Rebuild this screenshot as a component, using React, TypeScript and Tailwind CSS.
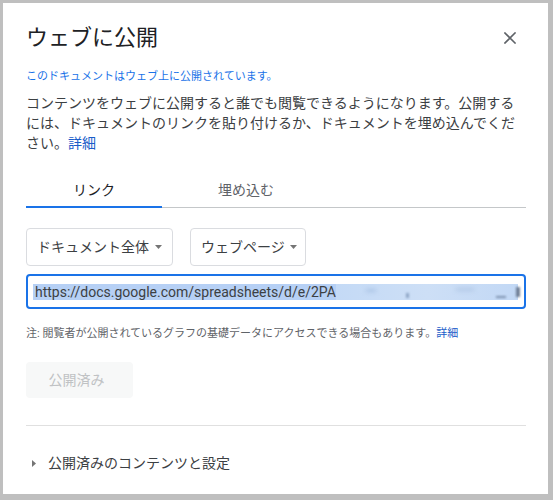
import React from "react";

function CloseIcon() {
  return (
    <svg width="12" height="12" viewBox="0 0 12 12" fill="none">
      <path d="M1 1 L11 11 M11 1 L1 11" stroke="#5f6368" strokeWidth="1.6" strokeLinecap="square" />
    </svg>
  );
}

function Caret() {
  return (
    <svg width="7" height="4" viewBox="0 0 7 4">
      <path d="M0 0 L7 0 L3.5 4 Z" fill="#757575" />
    </svg>
  );
}

export default function App() {
  return (
    <div className="w-[553px] h-[500px] bg-[#bfbfbf] pl-[3px] pt-[3px] font-['Roboto','Noto_Sans_CJK_JP',sans-serif]">
      <div className="w-[545px] h-[491px] bg-white pl-[23px] pt-[21px]">
        <div className="w-[500px] flex flex-col">
          {/* header */}
          <div className="flex items-center justify-between h-[28px]">
            <div className="text-[22px] leading-[28px] text-[#202124]">ウェブに公開</div>
            <button className="w-[32px] h-[28px] flex items-center justify-center">
              <CloseIcon />
            </button>
          </div>

          <div className="mt-[17px] text-[11px] leading-[16px] text-[#1a73e8]">
            このドキュメントはウェブ上に公開されています。
          </div>

          <p className="mt-[8px] text-[14px] leading-[20px] text-[#3c4043]">
            コンテンツをウェブに公開すると誰でも閲覧できるようになります。公開するには、ドキュメントのリンクを貼り付けるか、ドキュメントを埋め込んでください。<span className="text-[#1a5dc9]">詳細</span>
          </p>

          {/* tabs */}
          <div className="mt-[20px] flex border-b border-[#c4c7c9]">
            <div className="relative w-[136px] h-[34px] flex items-center justify-center text-[14px] text-[#202124]">
              リンク
              <div className="absolute left-0 right-0 bottom-[-1px] h-[2px] bg-[#1a73e8]" />
            </div>
            <div className="w-[168px] h-[34px] flex items-center justify-center text-[14px] text-[#5f6368]">
              埋め込む
            </div>
          </div>

          {/* dropdowns */}
          <div className="mt-[20px] flex gap-[17px]">
            <div className="h-[38px] flex items-center gap-[6px] pl-[10px] pr-[10px] border border-[#dadce0] rounded-[4px] text-[14px] text-[#3c4043]">
              <span>ドキュメント全体</span>
              <Caret />
            </div>
            <div className="h-[38px] flex items-center gap-[5px] pl-[10px] pr-[8px] border border-[#dadce0] rounded-[4px] text-[14px] text-[#3c4043]">
              <span>ウェブページ</span>
              <Caret />
            </div>
          </div>

          {/* url field */}
          <div className="mt-[8px] h-[35px] border-2 border-[#1a73e8] rounded-[4px] flex items-center pl-[5px] overflow-hidden">
            <div className="flex items-center h-[16px] text-[14px] leading-[16px] text-[#3c4043] whitespace-nowrap">
              <span className="bg-[#b6d0f5] pl-[2px]">https://docs.google.com/spreadsheets/d/e/2PA</span>
              <span className="relative w-[182px] h-[16px] bg-gradient-to-r from-[#c4daf6] via-[#cddff6] to-[#c2d8f5]">
                <span className="absolute left-[30px] top-[5px] w-[10px] h-[3px] bg-[#a9c2e4] blur-[2px]" />
                <span className="absolute left-[70px] top-[9px] w-[3px] h-[5px] bg-[#8fa6c6] blur-[1px]" />
                <span className="absolute left-[120px] top-[4px] w-[18px] h-[3px] bg-[#b1c8e6] blur-[2px]" />
                <span className="absolute left-[160px] top-[12px] w-[10px] h-[2px] bg-[#7f93b0] blur-[1px]" />
                <span className="absolute right-[-2px] top-[3px] w-[4px] h-[10px] bg-[#6f7f96] blur-[1px]" />
              </span>
            </div>
          </div>

          <div className="mt-[17px] text-[11px] leading-[16px] text-[#5f6368]">
            注: 閲覧者が公開されているグラフの基礎データにアクセスできる場合もあります。<span className="text-[#1a5dc9]">詳細</span>
          </div>

          <div className="mt-[20px]">
            <div className="w-[107px] h-[36px] rounded-[4px] bg-[#f7f8f8] flex items-center justify-center text-[14px] text-[#c0c2c4] pr-[6px]">
              公開済み
            </div>
          </div>

          <div className="mt-[27px] h-px bg-[#e0e0e0]" />

          <div className="mt-[27px] h-[20px] flex items-center text-[14px] leading-[20px] text-[#3c4043]">
            <svg width="4" height="7" viewBox="0 0 4 7" className="ml-[6px] mr-[12px]">
              <path d="M0 0 L4 3.5 L0 7 Z" fill="#757575" />
            </svg>
            <span>公開済みのコンテンツと設定</span>
          </div>
        </div>
      </div>
    </div>
  );
}
